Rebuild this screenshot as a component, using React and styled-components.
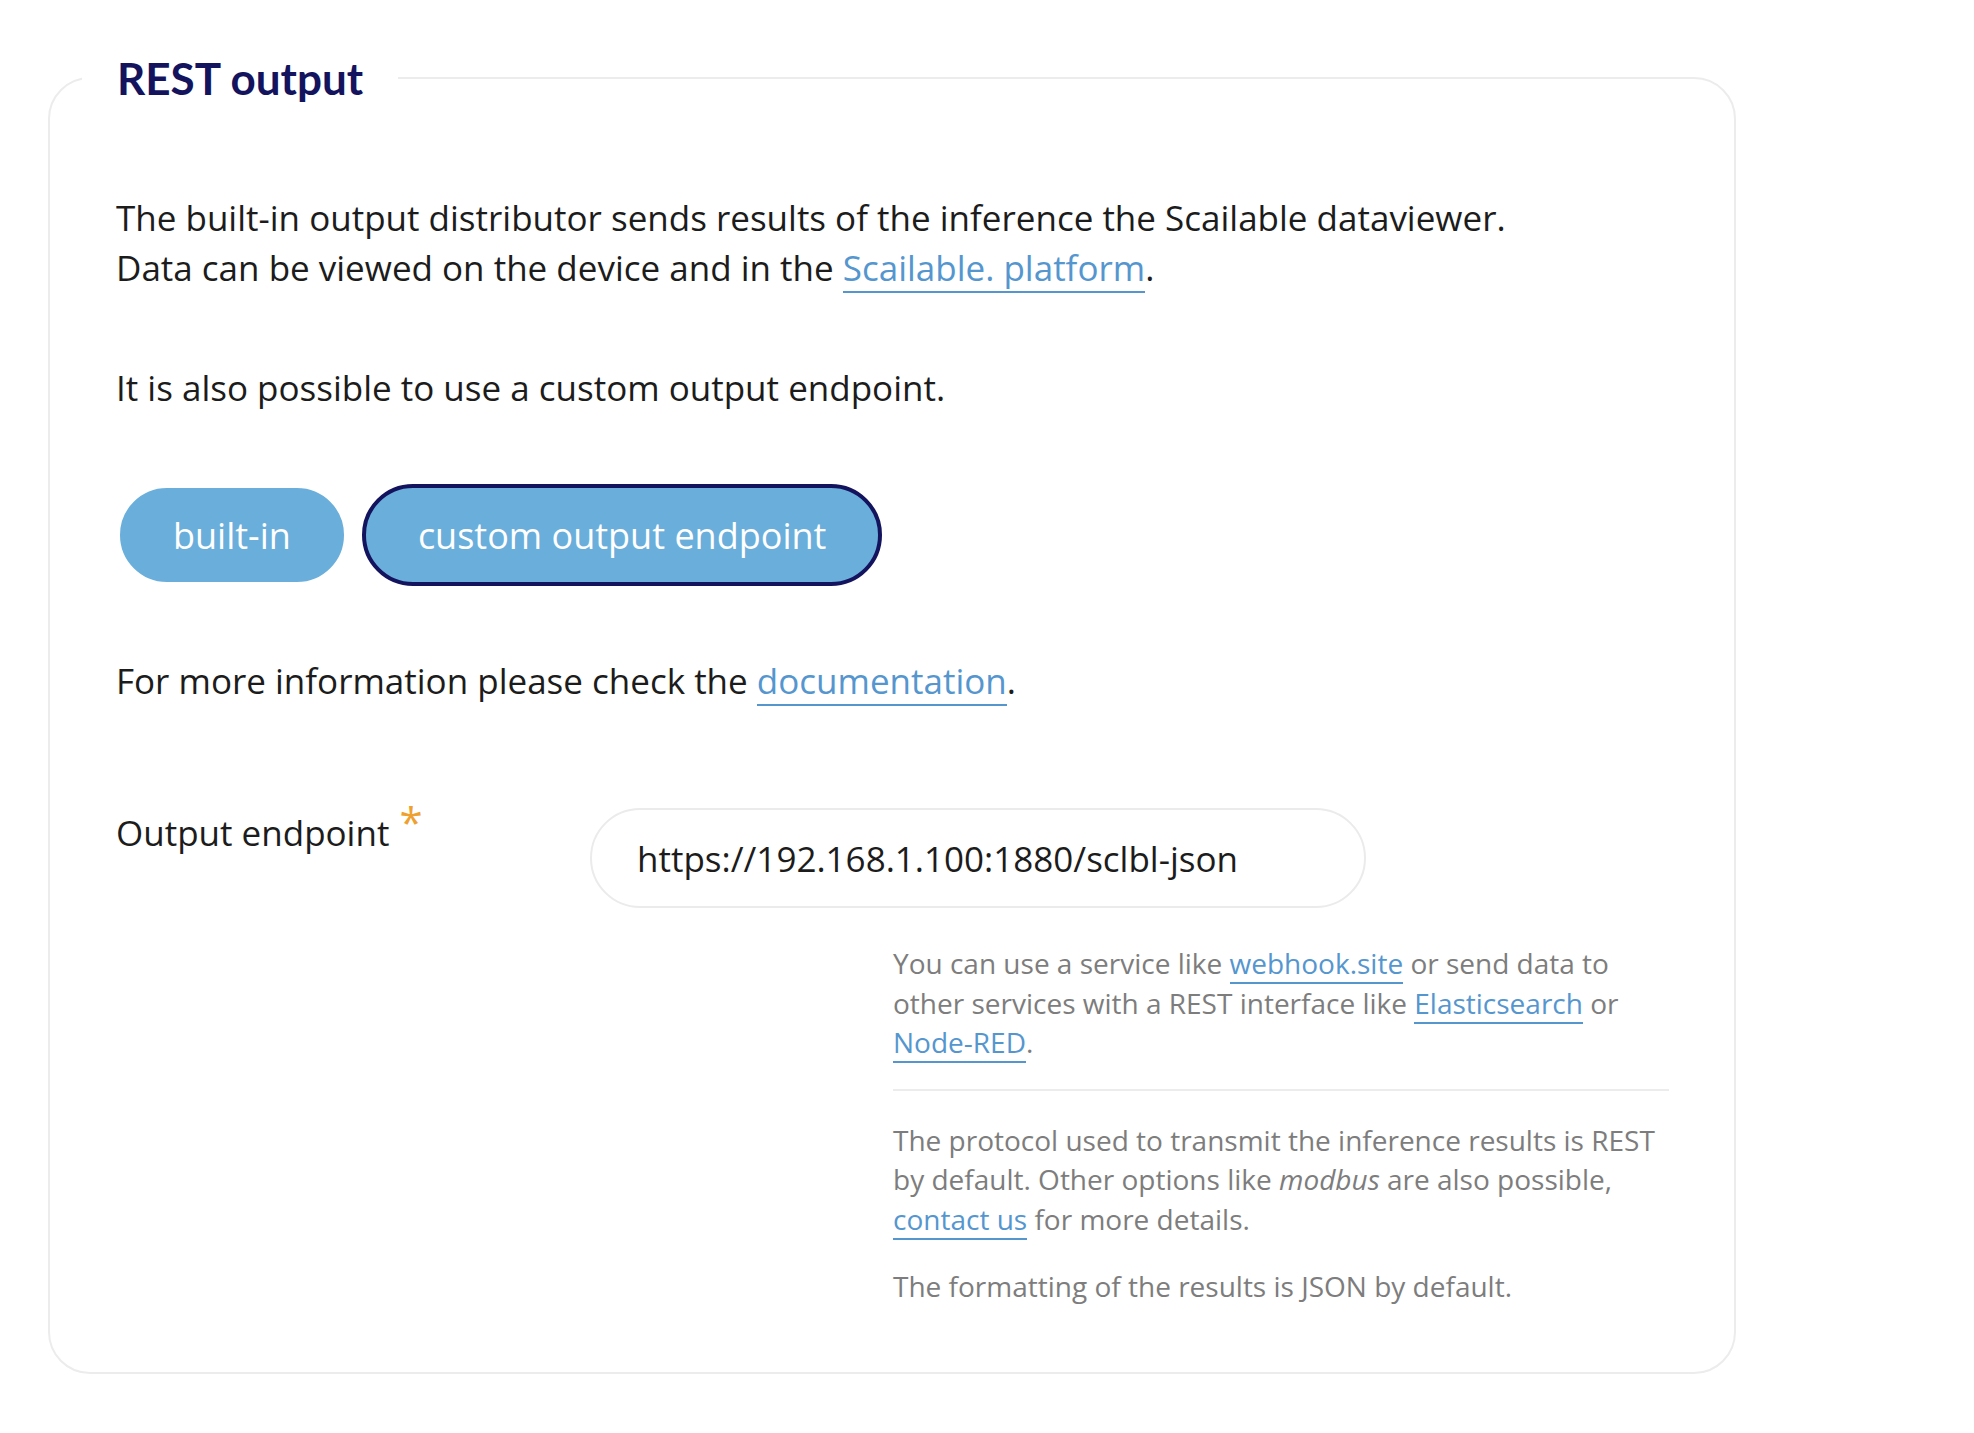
import React from 'react';
import styled, { createGlobalStyle } from 'styled-components';

const GlobalStyle = createGlobalStyle`
  body {
    margin: 0;
    background: #fff;
    font-family: "Open Sans", "Noto Sans", sans-serif;
    color: #1c1c1c;
  }
`;

const Page = styled.div`
  padding: 51px 0 60px 48px;
`;

const Card = styled.fieldset`
  width: 1688px;
  box-sizing: border-box;
  margin: 0;
  padding: 0 32px 65px 32px;
  border: 2px solid #ececec;
  border-radius: 42px;
`;

const Legend = styled.legend`
  padding: 0 35px;
  font-family: "Lato", "Inter", sans-serif;
  font-weight: 700;
  font-size: 44px;
  line-height: 54px;
  color: #14135e;
`;

const Body = styled.div`
  padding-left: 34px;
  padding-top: 88px;
`;

const Para = styled.p`
  margin: 0 0 ${p => p.$gap ?? 70}px;
  font-size: 35px;
  line-height: 50px;
`;

const Link = styled.a`
  color: #5596cf;
  text-decoration: none;
  border-bottom: 2px solid #5596cf;
  cursor: pointer;
`;

const Toggle = styled.div`
  display: flex;
  align-items: center;
  gap: 14px;
  margin-bottom: 70px;
`;

const ToggleButton = styled.button`
  height: 102px;
  padding: 0 ${p => (p.$active ? 52 : 53)}px;
  border: 4px solid ${p => (p.$active ? '#14135e' : '#fff')};
  border-radius: 51px;
  background: #6aaedb;
  color: #fff;
  font-family: "Open Sans", "Noto Sans", sans-serif;
  font-size: 36px;
  cursor: pointer;
`;

const FieldRow = styled.div`
  display: flex;
  align-items: flex-start;
  margin-top: 99px;
`;

const Label = styled.label`
  width: 474px;
  flex-shrink: 0;
  font-size: 35px;
  line-height: 50px;
`;

const Required = styled.span`
  color: #efa12f;
  font-size: 42px;
  position: relative;
  top: -8px;
  margin-left: 10px;
`;

const Input = styled.input`
  width: 776px;
  height: 100px;
  box-sizing: border-box;
  margin-top: 3px;
  padding: 0 45px;
  border: 2px solid #ebebeb;
  border-radius: 50px;
  font-family: "Open Sans", "Noto Sans", sans-serif;
  font-size: 35px;
  color: #1c1c1c;
  outline: none;
`;

const Help = styled.div`
  width: 776px;
  margin-left: 777px;
  margin-top: 36px;
  color: #7d7d7d;
  font-size: 28px;
  line-height: 39.5px;
`;

const HelpText = styled.p`
  margin: 0;
  padding: ${p => p.$pad || '0'};
`;

const Divider = styled.hr`
  border: none;
  border-top: 2px solid #ececec;
  margin: 26px 0 20px;
`;

export default function App() {
  return (
    <Page>
      <GlobalStyle />
      <Card>
        <Legend>REST output</Legend>
        <Body>
          <Para>
            The built-in output distributor sends results of the inference the Scailable dataviewer.
            <br />
            Data can be viewed on the device and in the <Link>Scailable. platform</Link>.
          </Para>
          <Para $gap={71}>It is also possible to use a custom output endpoint.</Para>
          <Toggle>
            <ToggleButton>built-in</ToggleButton>
            <ToggleButton $active>custom output endpoint</ToggleButton>
          </Toggle>
          <Para $gap={0}>
            For more information please check the <Link>documentation</Link>.
          </Para>
          <FieldRow>
            <Label>
              Output endpoint<Required>*</Required>
            </Label>
            <Input defaultValue="https://192.168.1.100:1880/sclbl-json" />
          </FieldRow>
          <Help>
            <HelpText>
              You can use a service like <Link>webhook.site</Link> or send data to other services
              with a REST interface like <Link>Elasticsearch</Link> or <Link>Node-RED</Link>.
            </HelpText>
            <Divider />
            <HelpText $pad="10px 0 0">
              The protocol used to transmit the inference results is REST by default. Other options
              like <em>modbus</em> are also possible, <Link>contact us</Link> for more details.
            </HelpText>
            <HelpText $pad="28px 0 0">The formatting of the results is JSON by default.</HelpText>
          </Help>
        </Body>
      </Card>
    </Page>
  );
}
